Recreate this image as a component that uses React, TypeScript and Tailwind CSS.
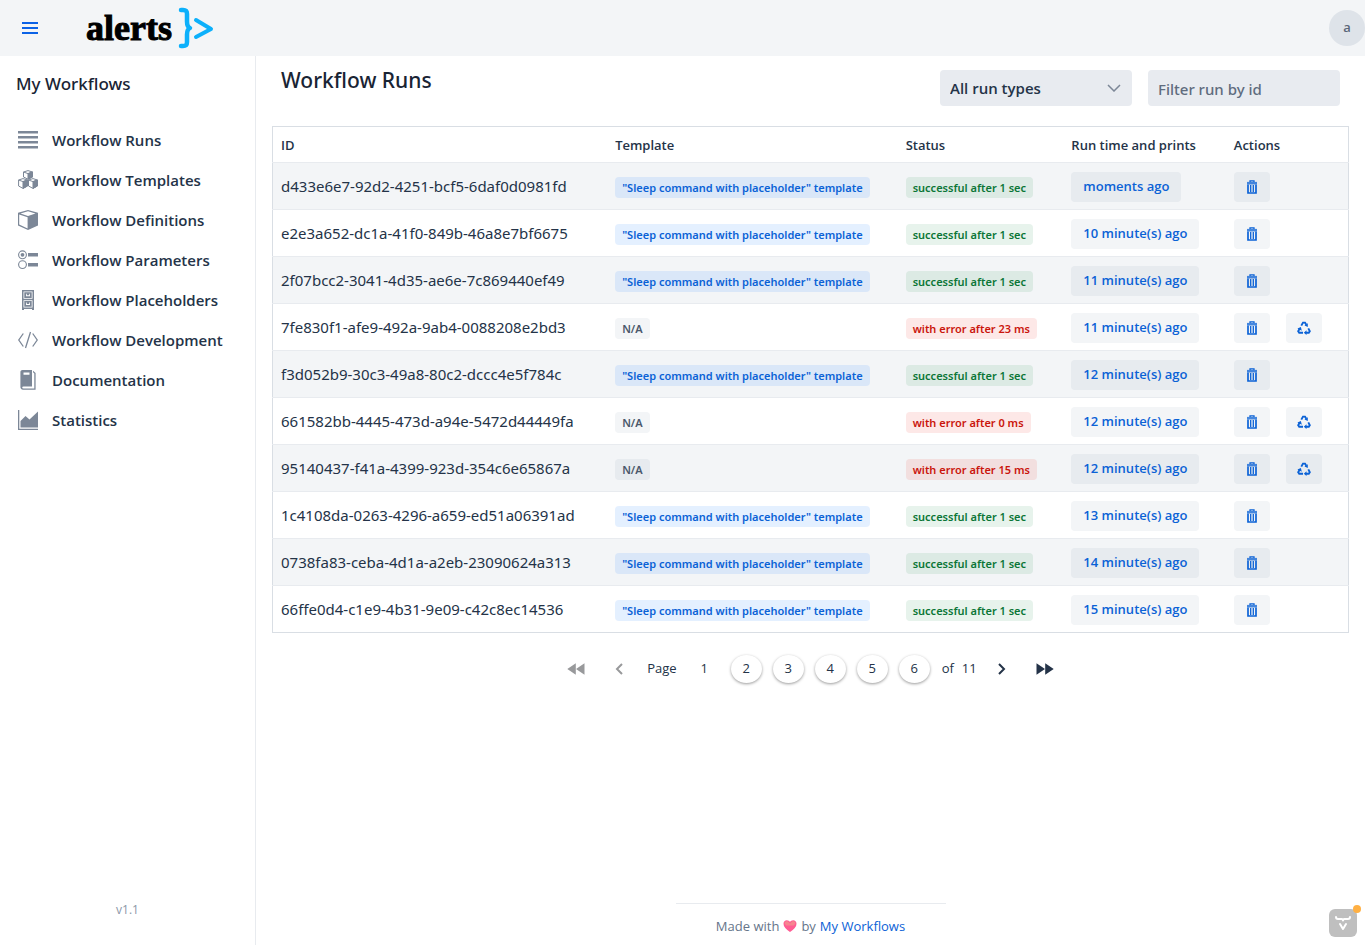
import React from "react";

type IconProps = { className?: string };

const LinesIcon = () => (
  <svg viewBox="0 0 20 20" className="size-5" fill="currentColor" aria-hidden="true">
    <path d="M0 1h20v2.500H0zM0 6h20v2.500H0zM0 11h20v2.500H0zM0 16h20v2.500H0z" />
  </svg>
);

const CubesIcon = () => (
  <svg viewBox="0 0 20 20" className="size-5" aria-hidden="true" stroke="currentColor" strokeWidth="1" strokeLinejoin="round">
    <g fill="none">
      <path d="M5.500 2 10 .6l4.500 1.400v5L10 9.200 5.500 7zM5.500 2 10 3.600 14.500 2" />
      <path d="M.6 10 5 8.600 9.500 10v6L5 18.400.6 16zM.6 10 5 11.600 9.500 10" />
      <path d="M10.500 10 15 8.600l4.400 1.400v6L15 18.400 10.500 16zM10.500 10l4.500 1.600 4.400-1.600" />
    </g>
    <path fill="currentColor" d="M10 3.600 14.500 2v5L10 9.200zM5 11.600 9.500 10v6L5 18.400zM15 11.600l4.400-1.600v6L15 18.400z" />
  </svg>
);

const CubeIcon = () => (
  <svg viewBox="0 0 20 20" className="size-5" fill="currentColor" aria-hidden="true">
    <path fillRule="evenodd" d="M10 0 0 2.800v12.700L10 20l10-4.500V2.800zM17.500 3.400 10 6 2.500 3.400 10 1.300zM1.200 4.400 9.600 7.200v11.200L1.200 14.600z" />
  </svg>
);

const OptionsIcon = () => (
  <svg viewBox="0 0 20 20" className="size-5" fill="currentColor" aria-hidden="true">
    <circle cx="4.500" cy="4.800" r="3.900" fill="none" stroke="currentColor" strokeWidth="1.100" />
    <circle cx="4.500" cy="4.800" r="1.900" />
    <circle cx="4.500" cy="14.600" r="3.900" fill="none" stroke="currentColor" strokeWidth="1.100" />
    <path d="M10 3h10v3.500H10zM10 13h10v3.500H10z" />
  </svg>
);

const CabinetIcon = () => (
  <svg viewBox="0 0 20 20" className="size-5" fill="currentColor" aria-hidden="true">
    <path fillRule="evenodd" d="M4 0h12v20h-2v-1H6v1H4zM5.500 1.500v7.300h9V1.500zM5.500 10.300v7.300h9v-7.300z" />
    <path fillRule="evenodd" d="M6.300 2.300h7.400V8H6.300zM8 3.800v2.400h4V3.800zM6.300 11.100h7.400v5.700H6.300zM8 12.600V15h4v-2.400z" />
    <path d="M8.800 3.300h2.400v2H8.800zM8.800 12.100h2.400v2H8.800z" />
  </svg>
);

const CodeIcon = () => (
  <svg viewBox="0 0 20 20" className="size-5" fill="none" stroke="currentColor" strokeWidth="1.300" aria-hidden="true">
    <path d="M5.300 3.500.8 10l4.500 6.500M14.700 3.500l4.500 6.500-4.500 6.500M12.500 2l-5 16" />
  </svg>
);

const BookIcon = () => (
  <svg viewBox="0 0 20 20" className="size-5" aria-hidden="true">
    <path fill="currentColor" fillRule="evenodd" d="M4.500 0H14v16.500H5.500c-1.700 0-1.700 2 0 2H16.300V3.500L15 2.200V.8l2.600 2.200v16.700H5c-1.700 0-2.600-1.300-2.600-2.700V2c0-1.200.9-2 2.100-2zM5.500 2.500v2.200h6V2.500z" />
  </svg>
);

const AreaChartIcon = () => (
  <svg viewBox="0 0 20 20" className="size-5" fill="currentColor" aria-hidden="true">
    <path d="M0 0h1.300v18.700H20V20H0z" />
    <path d="M2.500 11 7.500 6l4 3.500L20 1.500v16H2.500z" />
  </svg>
);

const TrashIcon = () => (
  <svg viewBox="0 0 14 14" className="size-3.5" fill="none" stroke="currentColor" aria-hidden="true">
    <path strokeWidth="1.300" d="M5 2V.8h4V2" />
    <path strokeWidth="2.600" strokeOpacity=".75" d="M2 3.200h10" />
    <path strokeWidth="1.700" d="M3 4.500v8.500h8V4.500" />
    <path strokeWidth="1.300" d="M5.700 5v7M8.300 5v7" />
  </svg>
);

const RecycleIcon = () => (
  <svg viewBox="0 0 14 14" className="size-3.5" aria-hidden="true">
    <g fill="none" stroke="currentColor" strokeWidth="1.900">
      <path d="M4.300 4.600 6 1.600h2l1.300 2.200" />
      <path d="M11.300 7.400l1.500 2.800-1 1.500H9" />
      <path d="M6 11.700H2.200l-1-1.500L2.600 7.800" />
    </g>
    <path fill="currentColor" d="M10.800 2.300v3.600L7.500 4.500zM9.500 9.200V14L6.800 11.700zM.4 7.500l3.500-1.400.9 3.700z" />
  </svg>
);

const HeartIcon = () => (
  <svg viewBox="0 0 14 13" className="h-3.5 w-3.5" aria-label="love" role="img">
    <path fill="#ff5c93" d="M7 12.500C3 9.500.5 7.300.5 4.200.5 2 2 .7 3.800.7 5.200.7 6.400 1.400 7 2.600 7.600 1.400 8.800.7 10.200.7c1.800 0 3.300 1.300 3.300 3.500 0 3.100-2.500 5.300-6.500 8.300z" />
    <path fill="#f5858f" d="M1.500 3.500C2 2 3.500 1.300 5 2l2 2 2-2c1.500-.7 3 0 3.500 1.500L11 6H3z" />
  </svg>
);

const DoubleArrow = ({ className }: IconProps) => (
  <svg viewBox="0 0 18 12" className={className} fill="currentColor" aria-hidden="true">
    <path d="M.5.200 9 6 .5 11.800zM9.200.200 17.700 6l-8.500 5.800z" />
  </svg>
);

const Chevron = ({ className }: IconProps) => (
  <svg viewBox="0 0 8 12" className={className} fill="none" stroke="currentColor" strokeWidth="2" aria-hidden="true">
    <path d="M1 1l5 5-5 5" />
  </svg>
);

const NAV = [
  { label: "Workflow Runs", Icon: LinesIcon },
  { label: "Workflow Templates", Icon: CubesIcon },
  { label: "Workflow Definitions", Icon: CubeIcon },
  { label: "Workflow Parameters", Icon: OptionsIcon },
  { label: "Workflow Placeholders", Icon: CabinetIcon },
  { label: "Workflow Development", Icon: CodeIcon },
  { label: "Documentation", Icon: BookIcon },
  { label: "Statistics", Icon: AreaChartIcon },
];

const SLEEP = '"Sleep command with placeholder" template';

type Run = { id: string; template?: string; status: string; failed?: boolean; time: string };

const RUNS: Run[] = [
  { id: "d433e6e7-92d2-4251-bcf5-6daf0d0981fd", template: SLEEP, status: "successful after 1 sec", time: "moments ago" },
  { id: "e2e3a652-dc1a-41f0-849b-46a8e7bf6675", template: SLEEP, status: "successful after 1 sec", time: "10 minute(s) ago" },
  { id: "2f07bcc2-3041-4d35-ae6e-7c869440ef49", template: SLEEP, status: "successful after 1 sec", time: "11 minute(s) ago" },
  { id: "7fe830f1-afe9-492a-9ab4-0088208e2bd3", status: "with error after 23 ms", failed: true, time: "11 minute(s) ago" },
  { id: "f3d052b9-30c3-49a8-80c2-dccc4e5f784c", template: SLEEP, status: "successful after 1 sec", time: "12 minute(s) ago" },
  { id: "661582bb-4445-473d-a94e-5472d44449fa", status: "with error after 0 ms", failed: true, time: "12 minute(s) ago" },
  { id: "95140437-f41a-4399-923d-354c6e65867a", status: "with error after 15 ms", failed: true, time: "12 minute(s) ago" },
  { id: "1c4108da-0263-4296-a659-ed51a06391ad", template: SLEEP, status: "successful after 1 sec", time: "13 minute(s) ago" },
  { id: "0738fa83-ceba-4d1a-a2eb-23090624a313", template: SLEEP, status: "successful after 1 sec", time: "14 minute(s) ago" },
  { id: "66ffe0d4-c1e9-4b31-9e09-c42c8ec14536", template: SLEEP, status: "successful after 1 sec", time: "15 minute(s) ago" },
];

const BADGE =
  "inline-flex h-[21px] items-center rounded px-[7px] font-['Noto_Sans','Open_Sans',sans-serif] text-[11px] font-semibold whitespace-nowrap";
const BUTTON = "flex h-[30px] items-center justify-center rounded bg-[#193b67]/5 text-[#0b62d6]";

const Header = () => (
  <header className="flex h-14 items-center bg-[#f3f5f7]">
    <button type="button" aria-label="Toggle menu" className="ml-[22px] text-[#0b62e6]">
      <svg viewBox="0 0 16 14" className="h-3.5 w-4" fill="currentColor" aria-hidden="true">
        <path d="M0 1h16v2H0zM0 6h16v2H0zM0 11h16v2H0z" />
      </svg>
    </button>
    <div className="ml-12 flex items-center gap-1.5">
      <span className="font-['Liberation_Serif',serif] text-4xl leading-[52px] font-bold text-black [-webkit-text-stroke:1px_black]">
        alerts
      </span>
      <svg viewBox="0 0 36 42" className="h-[42px] w-9" fill="none" stroke="#0cb0fb" strokeLinecap="round" strokeLinejoin="round" aria-hidden="true">
        <path strokeWidth="4.500" d="M3 3h2c2.800 0 4 1 4 4v7.500c0 4 1 5.700 3 6.500-2 .8-3 2.500-3 6.500V35c0 3-1.200 4-4 4H3" />
        <path strokeWidth="4" d="M18 13l15 9-15 8" />
      </svg>
    </div>
    <div className="ml-auto flex size-9 items-center justify-center rounded-full bg-[#dee3e9] text-[13px] font-semibold text-[#5a6778]">
      a
    </div>
  </header>
);

const Sidebar = () => (
  <aside className="flex w-64 shrink-0 flex-col border-r border-[#e8ebef]">
    <h2 className="px-4 pt-4 font-['Noto_Sans','Open_Sans',sans-serif] text-[17px] leading-6 font-medium text-[#192434]">
      My Workflows
    </h2>
    <nav className="mt-6 flex flex-col">
      {NAV.map(({ label, Icon }) => (
        <a key={label} href="#" className="flex h-10 items-center gap-3.5 pl-[18px] text-[15px] font-semibold text-[#243348]">
          <span className="text-[#7c8797]">
            <Icon />
          </span>
          {label}
        </a>
      ))}
    </nav>
    <p className="mt-auto pb-[25px] text-center text-xs leading-5 text-[#8b97a8]">v1.1</p>
  </aside>
);

const RunsTable = () => (
  <table className="w-full table-fixed border border-[#d9dee4] text-left">
    <colgroup>
      <col className="w-[31.1%]" />
      <col className="w-[27%]" />
      <col className="w-[15.4%]" />
      <col className="w-[15.1%]" />
      <col />
    </colgroup>
    <thead>
      <tr className="h-9 text-[13px] text-[#243348]">
        {["ID", "Template", "Status", "Run time and prints", "Actions"].map((name) => (
          <th key={name} scope="col" className="px-2 pt-0.5 font-semibold">
            {name}
          </th>
        ))}
      </tr>
    </thead>
    <tbody>
      {RUNS.map((run) => (
        <tr key={run.id} className="h-[47px] border-t border-[#e8ebef] odd:bg-[#f3f5f7]">
          <td className="px-2 font-['Noto_Sans','Open_Sans',sans-serif] text-[15px] whitespace-nowrap text-[#243348]">{run.id}</td>
          <td className="px-2">
            {run.template ? (
              <span className={`${BADGE} bg-[#3389ff]/13 text-[#0b62d6]`}>{run.template}</span>
            ) : (
              <span className={`${BADGE} bg-[#193b67]/5 text-[#4a586b]`}>N/A</span>
            )}
          </td>
          <td className="px-2">
            <span className={run.failed ? `${BADGE} bg-[#e71c13]/10 text-[#ca150c]` : `${BADGE} bg-[#168844]/10 text-[#0b7637]`}>
              {run.status}
            </span>
          </td>
          <td className="px-2 pt-px">
            <button type="button" className={`${BUTTON} px-3 text-[13px] font-semibold whitespace-nowrap`}>
              {run.time}
            </button>
          </td>
          <td className="px-2 pt-px">
            <div className="flex gap-4">
              <button type="button" aria-label="Delete run" className={`${BUTTON} w-9`}>
                <TrashIcon />
              </button>
              {run.failed && (
                <button type="button" aria-label="Run again" className={`${BUTTON} w-9`}>
                  <RecycleIcon />
                </button>
              )}
            </div>
          </td>
        </tr>
      ))}
    </tbody>
  </table>
);

const Pagination = () => (
  <nav aria-label="Pages" className="mt-[22px] flex h-7 items-center justify-center text-[13px] text-[#243348]">
    <button type="button" disabled aria-label="First page" className="flex w-9 justify-center text-[#98999b]">
      <DoubleArrow className="h-3 w-[18px] rotate-180" />
    </button>
    <button type="button" disabled aria-label="Previous page" className="ml-[7px] flex w-9 justify-center text-[#98999b]">
      <Chevron className="h-3 w-2 rotate-180" />
    </button>
    <span className="ml-2.5">Page</span>
    <div className="ml-3 flex gap-[11px]">
      <span className="flex h-7 w-[31px] items-center justify-center" aria-current="page">1</span>
      {[2, 3, 4, 5, 6].map((page) => (
        <button key={page} type="button" className="h-7 w-[31px] rounded-[50%] bg-white shadow-[0_1px_3px_rgba(0,0,0,0.4)]">
          {page}
        </button>
      ))}
    </div>
    <span className="ml-3">of</span>
    <span className="ml-2">11</span>
    <button type="button" aria-label="Next page" className="ml-[7px] flex w-9 justify-center">
      <Chevron className="h-3 w-2" />
    </button>
    <button type="button" aria-label="Last page" className="ml-[7px] flex w-9 justify-center">
      <DoubleArrow className="h-3 w-[18px]" />
    </button>
  </nav>
);

export default function App() {
  return (
    <div className="flex min-h-screen flex-col bg-white font-['Open_Sans','Noto_Sans',sans-serif] text-[#243348]">
      <Header />
      <div className="flex flex-1">
        <Sidebar />
        <main className="flex min-w-0 flex-1 flex-col px-4">
          <div className="flex items-start gap-4 px-[9px] pt-2.5 pb-5">
            <h1 className="mr-auto font-['Noto_Sans','Open_Sans',sans-serif] text-[21px] leading-7 font-medium text-[#192434]">
              Workflow Runs
            </h1>
            <div className="relative mt-1 w-48 text-[15px]">
              <select aria-label="Run type" className="h-9 w-full appearance-none rounded bg-[#e8ebf0] px-2.5 font-semibold text-[#243348]">
                <option>All run types</option>
              </select>
              <svg viewBox="0 0 14 8" className="pointer-events-none absolute top-3.5 right-[11px] h-2 w-3.5" fill="none" stroke="#7c8797" strokeWidth="1.500" aria-hidden="true">
                <path d="M1 1l6 6 6-6" />
              </svg>
            </div>
            <input
              type="text"
              aria-label="Filter run by id"
              placeholder="Filter run by id"
              className="mt-1 h-9 w-48 rounded bg-[#e8ebf0] px-2.5 pt-0.5 font-['Noto_Sans','Open_Sans',sans-serif] text-[15px] font-medium placeholder:text-[#5f6c7e]"
            />
          </div>
          <RunsTable />
          <Pagination />
          <footer className="mx-auto mt-auto w-1/3 max-w-[270px] min-w-[240px] border-t border-[#e8ebef] pt-3 pb-[9px] text-center">
            <p className="flex items-center justify-center text-[13px] leading-5 text-[#66758a]">
              Made with
              <span className="mx-1">
                <HeartIcon />
              </span>
              by
              <a href="#" className="ml-1 text-[#0b62d6]">My Workflows</a>
            </p>
          </footer>
        </main>
      </div>
      <button type="button" aria-label="Developer tools" className="fixed right-2 bottom-2 size-7 rounded-md bg-[#bfbfbf]">
        <svg viewBox="0 0 28 28" className="size-7" fill="none" stroke="#fff" strokeWidth="2" strokeLinecap="round" strokeLinejoin="round" aria-hidden="true">
          <path d="M7 8c0 1.500.5 2 2 2h3.500c1 0 1.500.5 1.500 1.500 0-1 .5-1.500 1.500-1.500H19c1.500 0 2-.5 2-2M11 15l3 5 3-5" />
        </svg>
        <span className="absolute -top-1 -right-1 size-2 rounded-full bg-[#ffb043]" />
      </button>
    </div>
  );
}
